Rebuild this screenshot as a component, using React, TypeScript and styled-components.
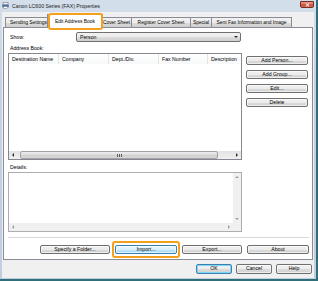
import React from 'react';
import styled, { createGlobalStyle } from 'styled-components';

const GlobalStyle = createGlobalStyle`
  html, body {
    margin: 0;
    padding: 0;
    background: #ffffff;
  }
  * {
    box-sizing: border-box;
  }
`;

const ORANGE = '#f5a01c';

const columns = [
  { label: 'Destination Name', width: 50 },
  { label: 'Company', width: 50 },
  { label: 'Dept./Div.', width: 50 },
  { label: 'Fax Number', width: 49 },
  { label: 'Description', width: 33 },
];

const tabs = [
  { label: 'Sending Settings', width: 45, clipped: true },
  { label: 'Edit Address Book', width: 56, active: true },
  { label: 'Cover Sheet', width: 31 },
  { label: 'Register Cover Sheet', width: 60 },
  { label: 'Special', width: 22 },
  { label: 'Sent Fax Information and Image', width: 81 },
];

const Arrow = ({ dir, faded }: { dir: 'left' | 'right' | 'up' | 'down'; faded?: boolean }) => {
  const points = {
    left: '3,0 3,4 1,2',
    right: '1,0 1,4 3,2',
    up: '0,3 4,3 2,1',
    down: '0,1 4,1 2,3',
  }[dir];
  return (
    <svg width="4" height="4" viewBox="0 0 4 4">
      <polygon points={points} fill={faded ? '#a0a0a0' : '#303030'} />
    </svg>
  );
};

const App = () => {
  return (
    <>
      <GlobalStyle />
      <Window>
        <TitleBar>
          <AppIcon width="7" height="7" viewBox="0 0 7 7">
            <rect x="1" y="0.5" width="5" height="2.5" fill="#f4f4f4" stroke="#7a7a7a" strokeWidth="0.6" />
            <rect x="0.3" y="2.6" width="6.4" height="3" rx="0.6" fill="#4a6fa5" />
            <rect x="1.5" y="4.6" width="4" height="2" fill="#ffffff" stroke="#7a7a7a" strokeWidth="0.5" />
          </AppIcon>
          <Title>Canon LC600 Series (FAX) Properties</Title>
          <CloseButton>
            <svg width="5" height="4" viewBox="0 0 5 4">
              <path d="M0.8 0.4 L4.2 3.6 M4.2 0.4 L0.8 3.6" stroke="#ffffff" strokeWidth="1" />
            </svg>
          </CloseButton>
        </TitleBar>

        <Client>
          <TabRow>
            {tabs.map((tab) =>
              tab.active ? (
                <ActiveTab key={tab.label} $w={tab.width}>
                  {tab.label}
                  <Highlight $inset="-2px -1px -2px 0px" />
                </ActiveTab>
              ) : (
                <Tab key={tab.label} $w={tab.width} $clipped={tab.clipped}>
                  {tab.label}
                </Tab>
              ),
            )}
          </TabRow>

          <Panel>
            <ShowRow>
              <FieldLabel $w={68}>Show:</FieldLabel>
              <Combo>
                <span>Person</span>
                <Arrow dir="down" />
              </Combo>
            </ShowRow>

            <SectionLabel $h={11}>Address Book:</SectionLabel>

            <ListRow>
              <ListView>
                <HeaderRow>
                  {columns.map((col) => (
                    <HeaderCell key={col.label} $w={col.width}>
                      {col.label}
                    </HeaderCell>
                  ))}
                </HeaderRow>
                <ListBody />
                <HScroll>
                  <ScrollArrow>
                    <Arrow dir="left" />
                  </ScrollArrow>
                  <Track>
                    <Thumb $w={198}>
                      <Grip />
                    </Thumb>
                  </Track>
                  <ScrollArrow>
                    <Arrow dir="right" />
                  </ScrollArrow>
                </HScroll>
              </ListView>

              <SideButtons>
                <Button $w={62}>Add Person...</Button>
                <Button $w={62}>Add Group...</Button>
                <Button $w={62}>Edit...</Button>
                <Button $w={62}>Delete</Button>
              </SideButtons>
            </ListRow>

            <SectionLabel $h={12}>Details:</SectionLabel>

            <DetailsBox>
              <DetailsMain>
                <DetailsText />
                <VScroll>
                  <ScrollArrow>
                    <Arrow dir="up" faded />
                  </ScrollArrow>
                  <ScrollArrow>
                    <Arrow dir="down" faded />
                  </ScrollArrow>
                </VScroll>
              </DetailsMain>
              <DetailsBottom>
                <HScrollFaded>
                  <ScrollArrow>
                    <Arrow dir="left" faded />
                  </ScrollArrow>
                  <ScrollArrow>
                    <Arrow dir="right" faded />
                  </ScrollArrow>
                </HScrollFaded>
                <Corner />
              </DetailsBottom>
            </DetailsBox>

            <Separator />

            <ActionRow>
              <Button $w={70}>Specify a Folder...</Button>
              <HighlightWrap>
                <Button $w={62} $hot>
                  Import...
                </Button>
                <Highlight $inset="-4px -3px -4px -3px" />
              </HighlightWrap>
              <Button $w={60}>Export...</Button>
              <Button $w={62}>About</Button>
            </ActionRow>
          </Panel>

          <Footer>
            <Button $w={36} $h={10} $default>
              OK
            </Button>
            <Button $w={36} $h={10}>
              Cancel
            </Button>
            <Button $w={36} $h={10}>
              Help
            </Button>
          </Footer>
        </Client>
      </Window>
    </>
  );
};

export default App;

const Window = styled.div`
  width: 318px;
  height: 281px;
  display: flex;
  flex-direction: column;
  background: linear-gradient(#d4dfeb, #c3d2e3 30%, #bfcfe0);
  border-right: 2px solid #2f6f7a;
  border-bottom: 2px solid #2f6f7a;
  font-family: 'Liberation Sans', Arial, sans-serif;
  font-size: 5.2px;
  color: #000;
  overflow: hidden;
`;

const TitleBar = styled.div`
  height: 12px;
  flex: none;
  display: flex;
  align-items: center;
  padding: 0 2px 1px 2px;
`;

const AppIcon = styled.svg`
  flex: none;
  margin-right: 3px;
`;

const Title = styled.div`
  flex: 1;
  color: #1b1b1b;
  white-space: nowrap;
`;

const CloseButton = styled.div`
  width: 14px;
  height: 7px;
  margin-top: -2px;
  display: flex;
  align-items: center;
  justify-content: center;
  border: 1px solid #7a2e22;
  border-radius: 0 0 2px 2px;
  background: linear-gradient(#e8a093, #d0644f 50%, #c0402a 51%, #d4705a);
`;

const Client = styled.div`
  flex: 1;
  margin: 0 0 1px 2px;
  width: 312px;
  display: flex;
  flex-direction: column;
  background: #f0f0f0;
  padding: 1px 1px 0 1px;
`;

const TabRow = styled.div`
  height: 14px;
  flex: none;
  display: flex;
  align-items: flex-end;
  padding-left: 2px;
  font-size: 4.9px;
`;

const Tab = styled.div<{ $w: number; $clipped?: boolean }>`
  width: ${(p) => p.$w}px;
  height: 10px;
  flex: none;
  display: flex;
  align-items: center;
  justify-content: ${(p) => (p.$clipped ? 'flex-start' : 'center')};
  padding-left: ${(p) => (p.$clipped ? 4 : 0)}px;
  white-space: nowrap;
  overflow: ${(p) => (p.$clipped ? 'hidden' : 'visible')};
  border: 1px solid #898c95;
  border-bottom: none;
  margin-right: -1px;
  background: linear-gradient(#f2f2f2, #ebebeb 50%, #dddddd 51%, #cfcfcf);
`;

const ActiveTab = styled.div<{ $w: number }>`
  position: relative;
  z-index: 2;
  width: ${(p) => p.$w}px;
  height: 14px;
  flex: none;
  margin: 0 -2px -1px -2px;
  display: flex;
  align-items: center;
  justify-content: center;
  white-space: nowrap;
  border: 1px solid #898c95;
  border-bottom: none;
  background: #ffffff;
`;

const Highlight = styled.div<{ $inset: string }>`
  position: absolute;
  inset: ${(p) => p.$inset};
  border: 2px solid ${ORANGE};
  border-radius: 3px;
  pointer-events: none;
`;

const HighlightWrap = styled.div`
  position: relative;
  display: flex;
`;

const Panel = styled.div`
  height: 233px;
  flex: none;
  display: flex;
  flex-direction: column;
  background: #ffffff;
  border: 1px solid #898c95;
  padding: 4px 3px 0 4px;
`;

const ShowRow = styled.div`
  height: 10px;
  display: flex;
  align-items: center;
`;

const FieldLabel = styled.div<{ $w: number }>`
  width: ${(p) => p.$w}px;
  padding-left: 2px;
  flex: none;
`;

const Combo = styled.div`
  width: 165px;
  height: 10px;
  display: flex;
  align-items: center;
  justify-content: space-between;
  padding: 0 2px 0 3px;
  border: 1px solid #707070;
  border-radius: 2px;
  background: linear-gradient(#f2f2f2, #ebebeb 50%, #dddddd 51%, #cfcfcf);
`;

const SectionLabel = styled.div<{ $h: number }>`
  height: ${(p) => p.$h}px;
  flex: none;
  display: flex;
  align-items: center;
  padding: 1px 0 0 2px;
`;

const ListRow = styled.div`
  height: 107px;
  flex: none;
  display: flex;
  gap: 4px;
`;

const ListView = styled.div`
  width: 234px;
  display: flex;
  flex-direction: column;
  border: 1px solid #828790;
  background: #ffffff;
`;

const HeaderRow = styled.div`
  height: 10px;
  flex: none;
  display: flex;
  background: linear-gradient(#ffffff, #f7f8f9);
`;

const HeaderCell = styled.div<{ $w: number }>`
  width: ${(p) => p.$w}px;
  flex: none;
  display: flex;
  align-items: center;
  padding: 0 0 0 3px;
  white-space: nowrap;
  overflow: hidden;
  border-right: 1px solid #e3e5e8;

  &:last-child {
    flex: 1;
    border-right: none;
  }
`;

const ListBody = styled.div`
  flex: 1;
`;

const HScroll = styled.div`
  height: 8px;
  flex: none;
  display: flex;
  background: linear-gradient(#e3e3e3, #f0f0f0);
`;

const HScrollFaded = styled(HScroll)`
  flex: 1;
  justify-content: space-between;
  background: #f0f0f0;
`;

const VScroll = styled.div`
  width: 8px;
  flex: none;
  display: flex;
  flex-direction: column;
  justify-content: space-between;
  background: #f0f0f0;
`;

const ScrollArrow = styled.div`
  width: 8px;
  height: 8px;
  flex: none;
  display: flex;
  align-items: center;
  justify-content: center;
`;

const Track = styled.div`
  flex: 1;
  display: flex;
  padding: 0 2px 0 3px;
`;

const Thumb = styled.div<{ $w: number }>`
  width: ${(p) => p.$w}px;
  height: 8px;
  display: flex;
  align-items: center;
  justify-content: center;
  border: 1px solid #a2a2a2;
  border-radius: 2px;
  background: linear-gradient(#eeeeee, #dcdcdc 50%, #cfcfcf 51%, #d8d8d8);
`;

const Grip = styled.div`
  width: 5px;
  height: 3px;
  background: repeating-linear-gradient(90deg, #5a5a5a 0 1px, transparent 1px 2px);
`;

const SideButtons = styled.div`
  display: flex;
  flex-direction: column;
  gap: 5px;
  padding-top: 3px;
`;

const Button = styled.button<{ $w: number; $h?: number; $hot?: boolean; $default?: boolean }>`
  width: ${(p) => p.$w}px;
  height: ${(p) => p.$h ?? 9}px;
  padding: 0;
  margin: 0;
  font: inherit;
  color: #000;
  line-height: 1;
  white-space: nowrap;
  border: 1px solid ${(p) => (p.$hot || p.$default ? '#3c7fb1' : '#707070')};
  border-radius: 2px;
  background: ${(p) =>
    p.$hot
      ? 'linear-gradient(#eaf6fd, #d9f0fc 50%, #bee6fd 51%, #a7d9f5)'
      : 'linear-gradient(#f2f2f2, #ebebeb 50%, #dddddd 51%, #cfcfcf)'};
  box-shadow: ${(p) => (p.$default ? 'inset 0 0 0 1px #7fd6f7' : 'inset 0 0 0 1px rgba(255,255,255,0.6)')};
`;

const DetailsBox = styled.div`
  width: 234px;
  height: 60px;
  flex: none;
  display: flex;
  flex-direction: column;
  border: 1px solid #abadb3;
  background: #ffffff;
`;

const DetailsMain = styled.div`
  flex: 1;
  display: flex;
`;

const DetailsText = styled.div`
  flex: 1;
`;

const DetailsBottom = styled.div`
  height: 8px;
  flex: none;
  display: flex;
`;

const Corner = styled.div`
  width: 8px;
  background: #f0f0f0;
`;

const Separator = styled.div`
  height: 1px;
  flex: none;
  margin: 5px 0 0 0;
  background: #d9d9d9;
`;

const ActionRow = styled.div`
  display: flex;
  justify-content: flex-end;
  gap: 5px;
  margin-top: 7px;
`;

const Footer = styled.div`
  flex: 1;
  display: flex;
  justify-content: flex-end;
  align-items: flex-start;
  gap: 4px;
  padding: 4px 1px 0 0;
`;
